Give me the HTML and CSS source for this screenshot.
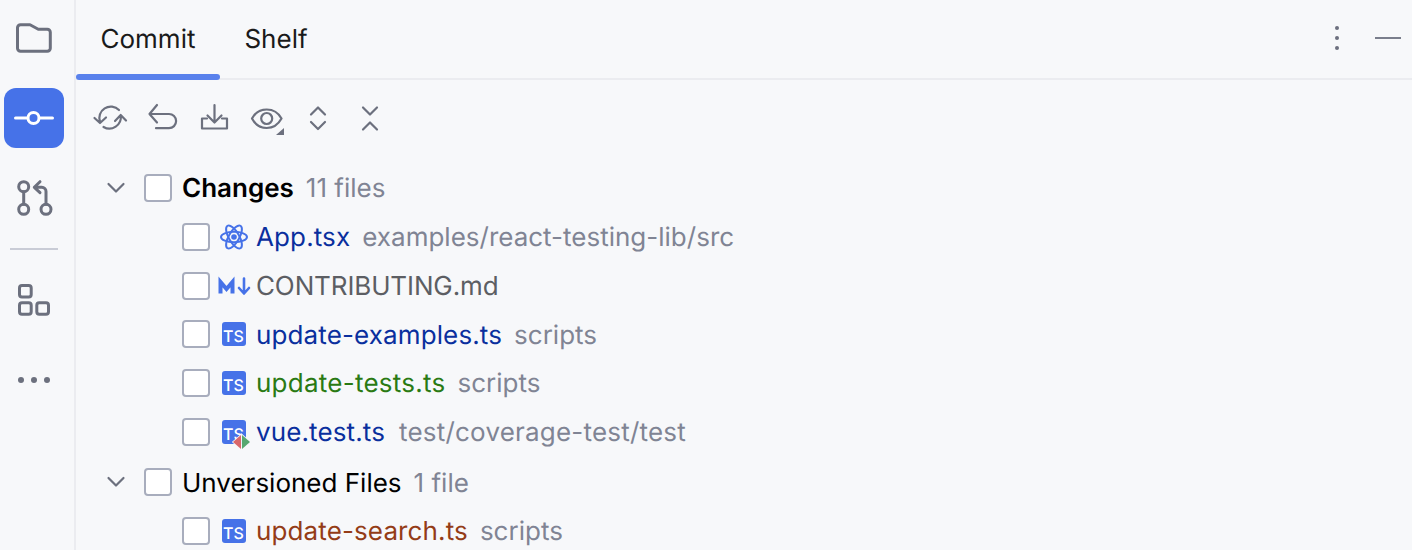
FILE: index.html
```html
<!DOCTYPE html>
<html lang="en">
<head>
    <meta charset="UTF-8">
    <title>Commit</title>
    <link rel="stylesheet" href="styles.css">
</head>
<body>
    <div class="sidebar">
        <div class="side-btn">
            <svg width="40" height="40" viewBox="0 0 40 40"><path class="ico3" d="M3.500 9.800a3 3 0 0 1 3-3H16l8.300 4.500h9a3 3 0 0 1 3 3v16a3 3 0 0 1-3 3H6.500a3 3 0 0 1-3-3z"/></svg>
        </div>
        <div class="side-btn active">
            <svg width="40" height="40" viewBox="0 0 40 40"><circle class="ico-w" cx="19.500" cy="20" r="5.500"/><path class="ico-w" d="M1.500 20H13M26 20h12.500"/></svg>
        </div>
        <div class="side-btn">
            <svg width="40" height="40" viewBox="0 0 40 40"><circle class="ico3" cx="9.700" cy="8.700" r="5"/><circle class="ico3" cx="9.700" cy="31.300" r="5"/><circle class="ico3" cx="32" cy="31.300" r="5"/><path class="ico3" d="M9.700 13.700v12.600M32 26.300V13.500a4.200 4.200 0 0 0-4.200-4.200h-7.500M26 3.700l-5.700 5.600 5.700 5.400"/></svg>
        </div>
        <div class="side-sep"></div>
        <div class="side-btn">
            <svg width="40" height="40" viewBox="0 0 40 40"><rect class="ico3" x="5.500" y="5.500" width="11.700" height="11.500" rx="2.500"/><rect class="ico3" x="5.500" y="22.800" width="11.700" height="11.500" rx="2.500"/><rect class="ico3" x="22.800" y="22.800" width="11.700" height="11.500" rx="2.500"/></svg>
        </div>
        <div class="side-btn">
            <svg width="40" height="40" viewBox="0 0 40 40"><circle class="dot" cx="7" cy="20" r="3"/><circle class="dot" cx="20" cy="20" r="3"/><circle class="dot" cx="33" cy="20" r="3"/></svg>
        </div>
    </div>

    <div class="main">
        <div class="tabs">
            <div class="tab selected">Commit</div>
            <div class="tab">Shelf</div>
            <div class="tab-actions">
                <svg width="8" height="28" viewBox="0 0 8 28"><circle class="dot" cx="4" cy="4" r="2"/><circle class="dot" cx="4" cy="14" r="2"/><circle class="dot" cx="4" cy="24" r="2"/></svg>
                <div class="minimize"></div>
            </div>
        </div>

        <div class="toolbar">
            <div class="tool">
                <svg width="36" height="36" viewBox="0 0 36 36"><path class="ico" d="M8 22A11.500 11.500 0 0 1 27 10M28.700 15.500A11.500 11.500 0 0 1 11.500 27M2.500 18l5.500 5 6-5.500M23 21l5.700-6 5.300 5.500"/></svg>
            </div>
            <div class="tool">
                <svg width="36" height="36" viewBox="0 0 36 36"><path class="ico" d="M13 5l-7.500 9 7.500 8.500M5.500 14H25a7.100 7.100 0 0 1 0 14.200H12"/></svg>
            </div>
            <div class="tool">
                <svg width="36" height="36" viewBox="0 0 36 36"><path class="ico" d="M18.500 5v17M11.500 15.500l7 7 7-7M11 18.500H6v10h25v-10h-5"/></svg>
            </div>
            <div class="tool">
                <svg width="36" height="36" viewBox="0 0 36 36"><path class="ico" d="M4 18.500c3.200-6 8.500-9 14.700-9s11.500 3 14.800 9c-3.300 6-8.600 9.500-14.800 9.500S7.200 24.500 4 18.500z"/><circle class="ico" cx="18.700" cy="18.500" r="5.500"/><path class="corner" d="M36 28v7h-8z"/></svg>
            </div>
            <div class="tool">
                <svg width="36" height="36" viewBox="0 0 36 36"><path class="ico" d="M11 14.500l7-7 7 7M11 22l7 7 7-7"/></svg>
            </div>
            <div class="tool">
                <svg width="36" height="36" viewBox="0 0 36 36"><path class="ico" d="M11 7.500l7 7 7-7M11 29.500l7-7 7 7"/></svg>
            </div>
        </div>

        <div class="tree">
            <div class="row group">
                <svg class="chevron" width="20" height="20" viewBox="0 0 20 20"><path class="ico" d="M2.500 6l7.500 7.500L17.500 6"/></svg>
                <span class="check"></span>
                <span class="name bold">Changes</span>
                <span class="hint">11 files</span>
            </div>
            <div class="row file">
                <span class="check"></span>
                <span class="file-icon">
                    <svg width="30" height="28" viewBox="0 0 30 28"><g class="react"><ellipse cx="15" cy="14" rx="13" ry="5.200"/><ellipse cx="15" cy="14" rx="13" ry="5.200" transform="rotate(60 15 14)"/><ellipse cx="15" cy="14" rx="13" ry="5.200" transform="rotate(120 15 14)"/></g><circle class="react-dot" cx="15" cy="14" r="2.800"/></svg>
                </span>
                <span class="name modified">App.tsx</span>
                <span class="hint">examples/react-testing-lib/src</span>
            </div>
            <div class="row file">
                <span class="check"></span>
                <span class="file-icon">
                    <svg width="32" height="18" viewBox="0 0 32 18"><path class="md" d="M2.500 16.500V5l6 7 6-7v11.500"/><path class="md-arrow" d="M26 1.500V16M21 11l5 5.500 5-5.500"/></svg>
                </span>
                <span class="name plain">CONTRIBUTING.md</span>
            </div>
            <div class="row file">
                <span class="check"></span>
                <span class="file-icon"><span class="ts">TS</span></span>
                <span class="name modified">update-examples.ts</span>
                <span class="hint">scripts</span>
            </div>
            <div class="row file">
                <span class="check"></span>
                <span class="file-icon"><span class="ts">TS</span></span>
                <span class="name added">update-tests.ts</span>
                <span class="hint">scripts</span>
            </div>
            <div class="row file">
                <span class="check"></span>
                <span class="file-icon">
                    <span class="ts">TS</span>
                    <svg class="merge" width="18" height="16" viewBox="0 0 18 16"><path class="merge-l" d="M9 1v14L1 8z"/><path class="merge-r" d="M10 1v14L18 8z"/></svg>
                </span>
                <span class="name modified">vue.test.ts</span>
                <span class="hint long">test/coverage-test/test</span>
            </div>
            <div class="row group second">
                <svg class="chevron" width="20" height="20" viewBox="0 0 20 20"><path class="ico" d="M2.500 6l7.500 7.500L17.500 6"/></svg>
                <span class="check"></span>
                <span class="name">Unversioned Files</span>
                <span class="hint">1 file</span>
            </div>
            <div class="row file">
                <span class="check"></span>
                <span class="file-icon"><span class="ts">TS</span></span>
                <span class="name unversioned">update-search.ts</span>
                <span class="hint">scripts</span>
            </div>
        </div>
    </div>
</body>
</html>
```

FILE: styles.css
```css
html, body {
    height: 100%;
}

body {
    font-family: Inter, "Liberation Sans", sans-serif;
    font-size: 26px;
    text-rendering: geometricPrecision;
    margin: 0;
    background-color: #f7f8fa;
    color: #000;
    display: flex;
    overflow: hidden;
}

/* icons */
svg {
    display: block;
    flex: none;
    overflow: visible;
}

.ico, .ico3, .ico-w, .md, .md-arrow, .react {
    fill: none;
    stroke-linecap: round;
    stroke-linejoin: round;
}

.ico {
    stroke: #6c707e;
    stroke-width: 2.200;
}

.ico3 {
    stroke: #6c707e;
    stroke-width: 3;
}

.ico-w {
    stroke: #fff;
    stroke-width: 3;
}

.dot, .corner {
    fill: #6c707e;
}

/* left tool strip */
.sidebar {
    width: 76px;
    flex: none;
    box-sizing: border-box;
    border-right: 2px solid #ebecf0;
    display: flex;
    flex-direction: column;
    align-items: center;
    padding: 8px 10px 0 4px;
}

.side-btn {
    width: 60px;
    height: 60px;
    flex: none;
    display: flex;
    align-items: center;
    justify-content: center;
    border-radius: 12px;
    margin-bottom: 20px;
}

.side-btn.active {
    background-color: #4672e8;
}

.side-sep {
    width: 48px;
    height: 2px;
    flex: none;
    background-color: #c9ccd6;
    margin-bottom: 20px;
}

.main {
    flex: 1;
    min-width: 0;
}

/* tabs */
.tabs {
    height: 80px;
    box-sizing: border-box;
    border-bottom: 2px solid #ebecf0;
    display: flex;
    align-items: stretch;
}

.tab {
    padding: 0 24.500px;
    line-height: 79px;
    color: #1a1a1a;
}

.tab.selected {
    height: 80px;
    box-sizing: border-box;
    position: relative;
}

.tab.selected::after {
    content: "";
    position: absolute;
    left: 0;
    right: 0;
    top: 74px;
    height: 6px;
    border-radius: 3px;
    background-color: #5981ec;
}

.tab-actions {
    margin-left: auto;
    display: flex;
    align-items: center;
    gap: 34px;
    padding: 0 11px 2px 0;
}

.minimize {
    width: 26px;
    height: 2px;
    background-color: #7a7e8c;
}

/* toolbar */
.toolbar {
    display: flex;
    gap: 16px;
    padding: 20px 0 0 16px;
    height: 36px;
}

.tool {
    width: 36px;
    height: 36px;
}

/* changes tree */
.tree {
    padding-top: 27.600px;
}

.row {
    height: 48.800px;
    display: flex;
    align-items: center;
}

.row.group {
    padding-left: 30px;
}

.row.second {
    margin-top: 1.500px;
}

.row.file {
    padding-left: 106px;
}

.chevron {
    margin-right: 18px;
}

.check {
    width: 24px;
    height: 24px;
    flex: none;
    background-color: #fff;
    border: 2px solid #a8adbd;
    border-radius: 4px;
}

.group .check {
    margin-right: 10px;
}

.file-icon {
    width: 46px;
    height: 30px;
    flex: none;
    position: relative;
    display: flex;
    align-items: center;
    justify-content: center;
    box-sizing: border-box;
    padding-left: 1px;
}

.ts {
    width: 24px;
    height: 24px;
    overflow: hidden;
    border-radius: 3px;
    background-color: #4672e8;
    color: #fff;
    font-size: 16px;
    font-weight: 500;
    line-height: 29px;
    text-align: center;
}

.merge {
    position: absolute;
    left: 22px;
    top: 17px;
}

.merge-l, .merge-r {
    stroke: #f7f8fa;
    stroke-width: 1.500;
    paint-order: stroke;
}

.merge-l {
    fill: #d9686b;
}

.merge-r {
    fill: #58a870;
}

.react {
    stroke: #4672e8;
    stroke-width: 2;
}

.react-dot {
    fill: #4672e8;
}

.md {
    stroke: #4672e8;
    stroke-width: 4;
    stroke-linecap: butt;
    stroke-linejoin: miter;
}

.md-arrow {
    stroke: #4672e8;
    stroke-width: 2.600;
}

.name, .hint {
    padding-top: 1.600px;
    white-space: nowrap;
}

.name {
    margin-right: 12px;
}

.bold {
    font-weight: 600;
}

.hint {
    color: #808494;
}

.hint.long {
    letter-spacing: 0.2px;
    margin-left: 2px;
}

.modified {
    color: #0a2f9e;
    letter-spacing: 0.12px;
}

.plain {
    color: #5c5e63;
    letter-spacing: -0.12px;
}

.added {
    color: #2a7a13;
    letter-spacing: 0.25px;
}

.unversioned {
    color: #943c17;
    letter-spacing: 0.12px;
}
```
